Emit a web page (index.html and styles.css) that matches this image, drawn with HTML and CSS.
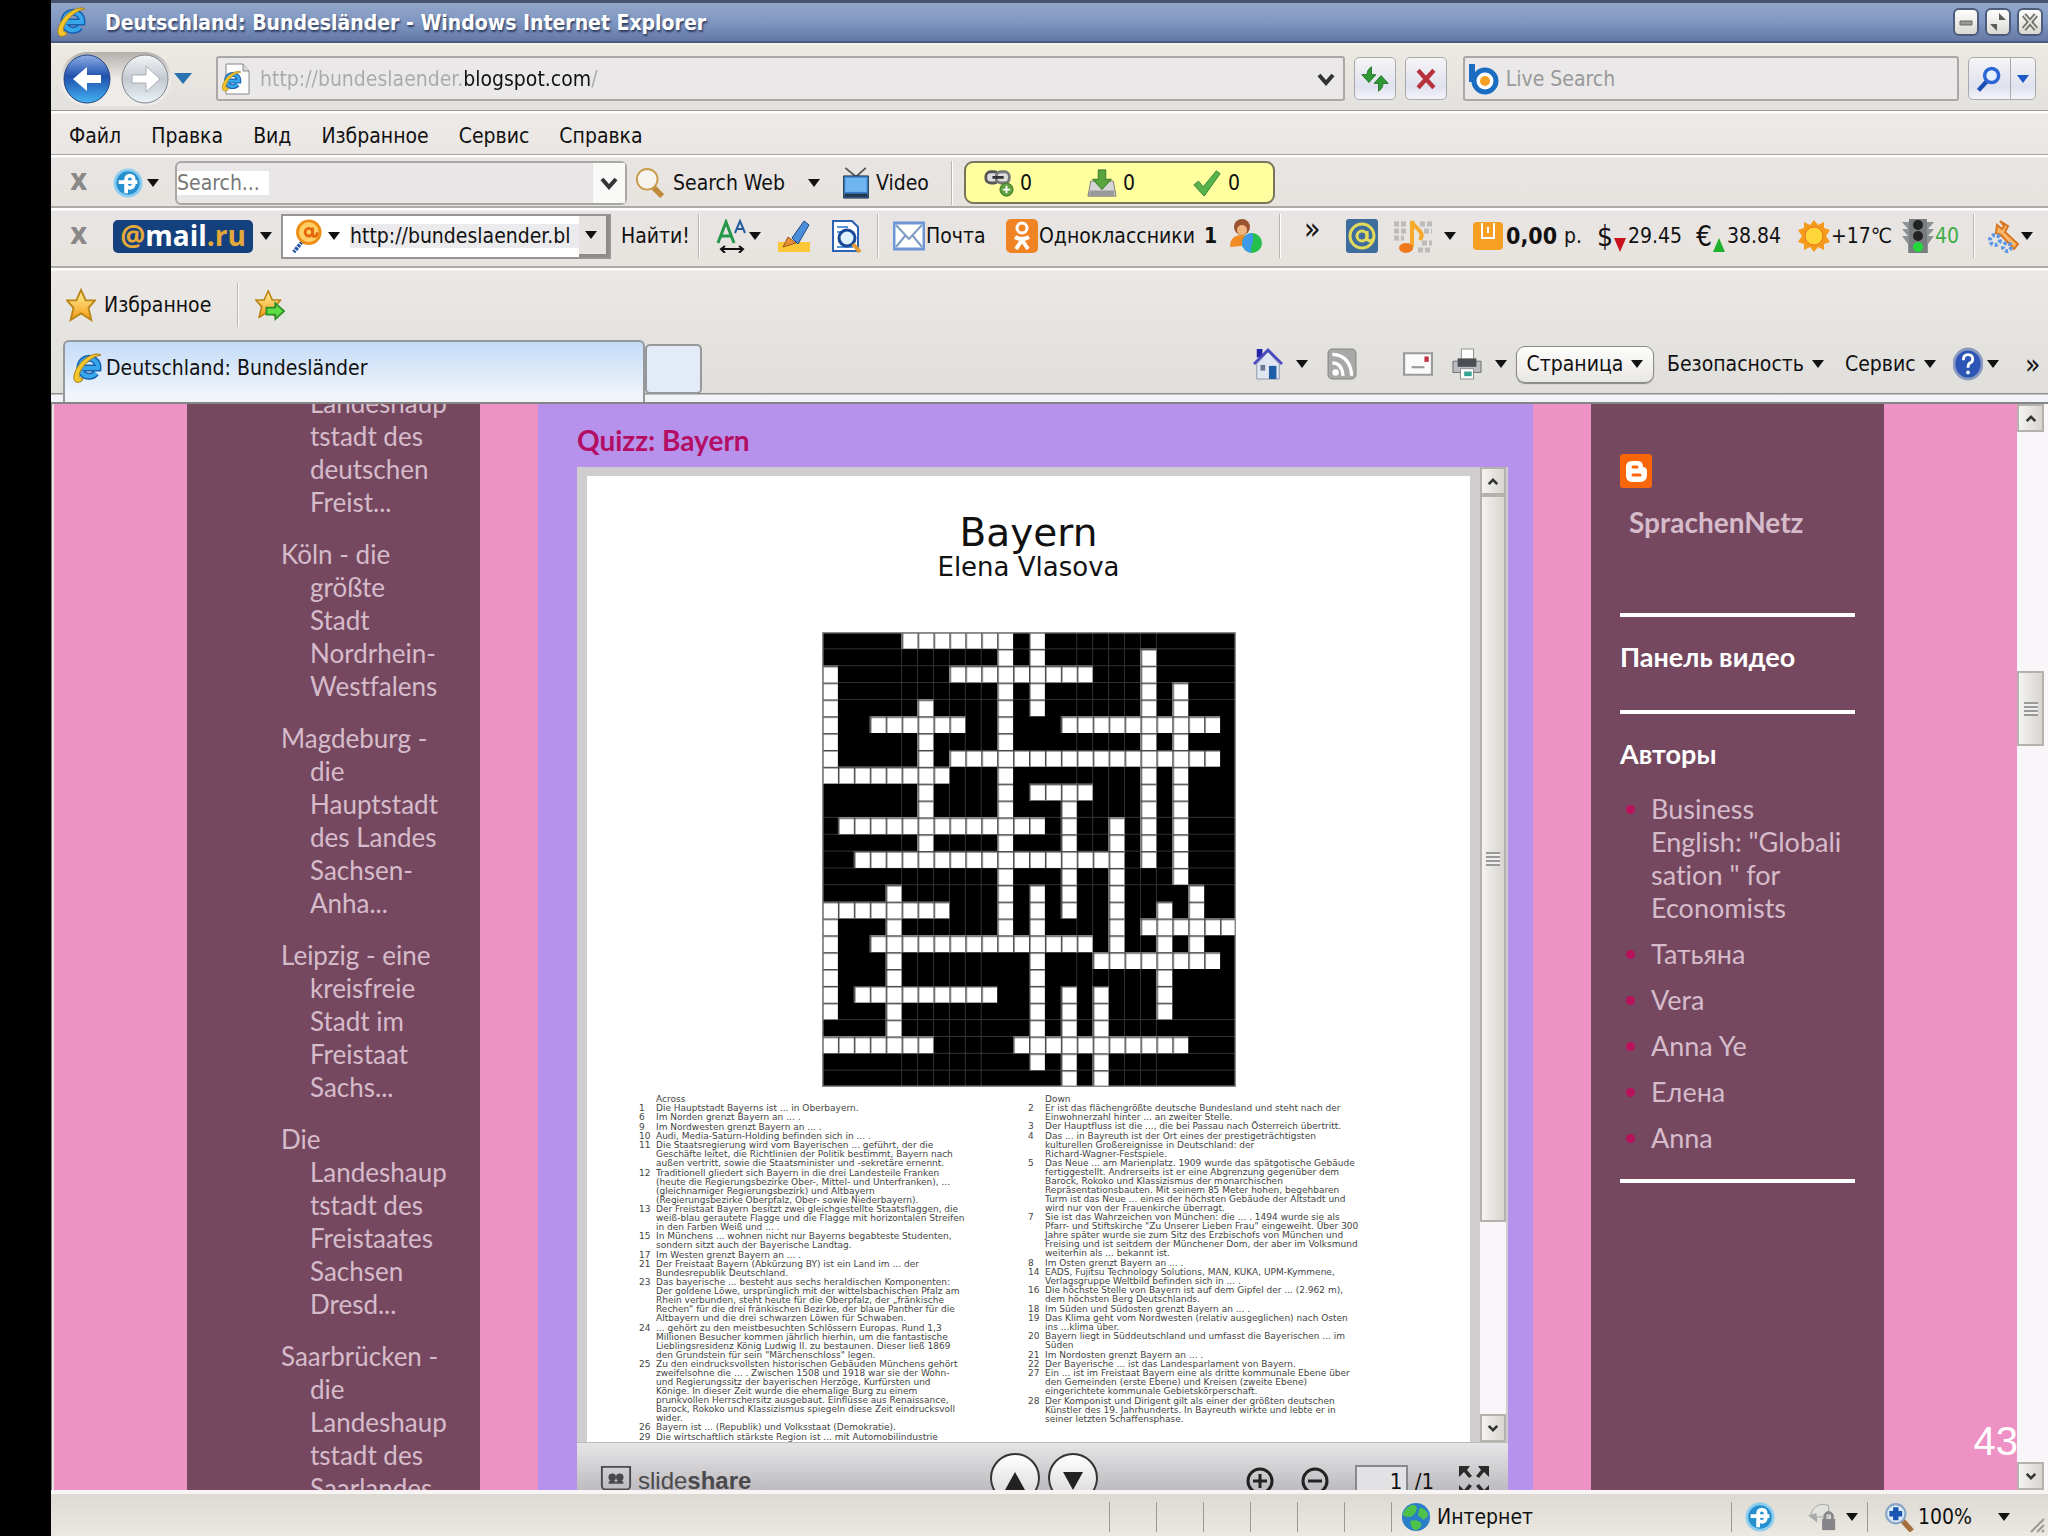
FILE: index.html
```html
<!DOCTYPE html>
<html lang="ru">
<head>
  <meta charset="UTF-8">
  <meta name="viewport" content="width=device-width, initial-scale=1.0">
  <title>Deutschland: Bundesländer</title>
  <link rel="stylesheet" href="styles.css">
</head>
<body>
  <!-- icon sprite -->
  <svg class="sprite" aria-hidden="true">
    <defs>
      <linearGradient id="blue" x1="0" y1="0" x2="0" y2="1"><stop offset="0" stop-color="#8fb0e4"/><stop offset=".45" stop-color="#1f4fae"/><stop offset="1" stop-color="#45b4f2"/></linearGradient>
      <linearGradient id="silver" x1="0" y1="0" x2="0" y2="1"><stop offset="0" stop-color="#f4f6f7"/><stop offset=".5" stop-color="#c3c9d0"/><stop offset="1" stop-color="#e9f3f6"/></linearGradient>
      <linearGradient id="gold" x1="0" y1="0" x2="0" y2="1"><stop offset="0" stop-color="#fff3a0"/><stop offset="1" stop-color="#f59a14"/></linearGradient>
    </defs>
    <symbol id="i-ie" viewBox="0 0 32 32">
      <path d="M24 21a9 9 0 1 1 2-5H10" fill="none" stroke="#1660b0" stroke-width="7"/>
      <path d="M24 21a9 9 0 1 1 2-5H10" fill="none" stroke="#38a6ea" stroke-width="4"/>
      <path d="M29 3C23-1 8 7 3 20c-3 8 0 13 7 9l1-3c-4 1-5-2-2-8C13 11 21 4 29 3z" fill="#f2c62c" stroke="#a8801c"/>
    </symbol>
    <symbol id="i-iepage" viewBox="0 0 32 32"><path d="M6 1h17l6 7v23H6z" fill="#fdfdfd" stroke="#888"/><path d="M23 1v7h6" fill="#ddd" stroke="#888"/><use href="#i-ie" x="1" y="7" width="22" height="22"/></symbol>
    <symbol id="i-back" viewBox="0 0 48 50"><ellipse cx="24" cy="25" rx="23" ry="24" fill="url(#blue)" stroke="#24437f"/><path d="M10 25l14-12v8h14v8H24v8z" fill="#fff"/></symbol>
    <symbol id="i-forward" viewBox="0 0 48 50"><ellipse cx="24" cy="25" rx="23" ry="24" fill="url(#silver)" stroke="#80868e"/><path d="M39 25L25 12v9H11v8h14v9z" fill="#fff" stroke="#aab0b6"/></symbol>
    <symbol id="i-refresh" viewBox="0 0 32 32"><path d="M12 2c-4 3-5 5-5 9H1l8 9 8-9h-5c0-4 0-6 0-9zM20 30c4-3 5-5 5-9h6l-8-9-8 9h5c0 4 0 6 0 9z" fill="#2f9a34" stroke="#1c6b22"/></symbol>
    <symbol id="i-stop" viewBox="0 0 32 32"><path d="M7 6l18 20M25 6L7 26" stroke="#b8323e" stroke-width="5"/></symbol>
    <symbol id="i-bing" viewBox="0 0 32 32"><path d="M4 1v18" stroke="#1b6dc1" stroke-width="6"/><circle cx="17" cy="18" r="11" fill="#fff" stroke="#1b6dc1" stroke-width="5"/><circle cx="17" cy="18" r="5" fill="#f7a123"/></symbol>
    <symbol id="i-lens" viewBox="0 0 32 32"><path d="M14 18L4 29" stroke="#1c50b4" stroke-width="5"/><circle cx="19" cy="12" r="8" fill="#e4f0ff" stroke="#2b66d4" stroke-width="4"/></symbol>
    <symbol id="i-lens-gold" viewBox="0 0 32 32"><path d="M20 21l9 9" stroke="#c08a3a" stroke-width="6"/><circle cx="13" cy="12" r="11" fill="#f6f4ee" stroke="#c89a4a" stroke-width="2"/></symbol>
    <symbol id="i-plus" viewBox="0 0 32 32"><circle cx="16" cy="16" r="14" fill="#2791cf" stroke="#8ccdf0" stroke-width="3"/><path d="M14 27V12a4 4 0 0 1 8 0v4a4 4 0 0 1-8 2M6 15h20" fill="none" stroke="#fff" stroke-width="4"/></symbol>
    <symbol id="i-tv" viewBox="0 0 32 36"><path d="M4 1l12 10L27 1" fill="none" stroke="#555" stroke-width="2"/><path d="M2 10h28v25H2z" fill="#3b7ec4" stroke="#234"/><path d="M4 12h24v16H4z" fill="#6fb5f2"/><path d="M3 30h26v4H3z" fill="#26384e"/></symbol>
    <symbol id="i-link" viewBox="0 0 32 32"><rect x="2" y="4" width="14" height="12" rx="5" fill="#ddd" stroke="#555" stroke-width="3"/><rect x="13" y="4" width="14" height="12" rx="5" fill="#ddd" stroke="#777" stroke-width="3"/><path d="M9 10h12" stroke="#333" stroke-width="3"/><circle cx="24" cy="23" r="7" fill="#5e9f3d" stroke="#3c7424"/><path d="M24 19v8M20 23h8" stroke="#fff" stroke-width="2"/></symbol>
    <symbol id="i-down" viewBox="0 0 32 32"><path d="M4 14h24l3 16H1z" fill="#d5d5d5" stroke="#777"/><path d="M3 24h26v6H2z" fill="#999"/><path d="M12 2h8v10h6L16 23 6 12h6z" fill="#59a33c" stroke="#34702a"/></symbol>
    <symbol id="i-check" viewBox="0 0 32 32"><path d="M2 18l5-4 5 6L26 3l4 3-17 24z" fill="#58b34c" stroke="#368435"/></symbol>
    <symbol id="i-agent" viewBox="0 0 32 36"><path d="M12 24L3 35" stroke="#2353a8" stroke-width="4" stroke-dasharray="3 1"/><circle cx="19" cy="14" r="12" fill="#ffcf66" stroke="#ee8d14" stroke-width="3"/><circle cx="19" cy="14" r="4" fill="none" stroke="#e8660d" stroke-width="3"/><path d="M23 9v7c0 4 5 3 5-2" fill="none" stroke="#e8660d" stroke-width="3"/></symbol>
    <symbol id="i-fonts" viewBox="0 0 32 34"><path d="M2 24L10 3l8 21M5 17h11" fill="none" stroke="#23984a" stroke-width="3"/><path d="M19 14l5-12 5 12M21 10h7" fill="none" stroke="#265c9c" stroke-width="2"/><path d="M5 30h22M9 27l-4 3 4 4M23 27l4 3-4 4" fill="none" stroke="#111" stroke-width="2"/></symbol>
    <symbol id="i-marker" viewBox="0 0 32 34"><path d="M0 23h32v10H0z" fill="#fcc736"/><path d="M14 19L26 2l5 4-11 19z" fill="#4a8edb" stroke="#1e4785"/><path d="M5 28l5-10 8 6z" fill="#e79038" stroke="#9a5515"/></symbol>
    <symbol id="i-find" viewBox="0 0 32 34"><path d="M3 2h19l6 6v24H3z" fill="#fff" stroke="#2b62b6" stroke-width="2"/><path d="M7 8h11M7 13h5M7 28h16" stroke="#5b95dc" stroke-width="2"/><circle cx="17" cy="19" r="8" fill="#e0f1ff" stroke="#174a96" stroke-width="3"/><path d="M23 25l7 8" stroke="#e39a35" stroke-width="4"/></symbol>
    <symbol id="i-mail" viewBox="0 0 32 28"><path d="M1 1h30v26H1z" fill="#fff" stroke="#6f96d4" stroke-width="3"/><path d="M3 3l13 14L29 3M3 25l9-11M29 25l-9-11" fill="none" stroke="#7f9cc4" stroke-width="2"/></symbol>
    <symbol id="i-ok" viewBox="0 0 32 34"><rect width="32" height="34" rx="5" fill="#f08424"/><circle cx="16" cy="9" r="5" fill="none" stroke="#fff" stroke-width="3"/><path d="M9 18q7 4 14 0M10 30l6-9 6 9" fill="none" stroke="#fff" stroke-width="4"/></symbol>
    <symbol id="i-person" viewBox="0 0 32 34"><circle cx="12" cy="8" r="8" fill="#9a5530"/><circle cx="12" cy="11" r="5" fill="#f0b680"/><path d="M0 28c0-9 5-12 12-12s10 4 10 10z" fill="#f08b26"/><circle cx="22" cy="24" r="10" fill="#23c04d"/><path d="M22 14a10 10 0 0 0 0 20c-4-6 4-9 0-20z" fill="#3e9bea"/></symbol>
    <symbol id="i-at" viewBox="0 0 32 34"><rect width="32" height="34" rx="3" fill="#3e6c9c"/><circle cx="16" cy="17" r="12" fill="none" stroke="#e3d95c" stroke-width="3"/><circle cx="16" cy="17" r="5" fill="none" stroke="#e3d95c" stroke-width="3"/><path d="M21 12v8q3 4 6 0" fill="none" stroke="#e3d95c" stroke-width="3"/></symbol>
    <symbol id="i-music" viewBox="0 0 38 34"><path d="M0 5h12M0 12h12M0 19h10M26 5h12M30 12h8M24 31h14M28 24h10" stroke="#bcbcbc" stroke-width="5" stroke-dasharray="5 2"/><path d="M18 28V2c2 8 14 10 8 19" fill="none" stroke="#f6a92b" stroke-width="4"/><ellipse cx="12" cy="29" rx="7" ry="5" fill="#f0781c"/></symbol>
    <symbol id="i-wallet" viewBox="0 0 32 32"><rect x="1" y="2" width="30" height="28" rx="4" fill="#f79f22"/><path d="M10 3v15h12V3M16 7v6" fill="none" stroke="#fff" stroke-width="2"/></symbol>
    <symbol id="i-sun" viewBox="0 0 32 32"><path d="M16 0l4 5 6-3v6l6 2-4 6 4 6-6 2v6l-6-3-4 5-4-5-6 3v-6l-6-2 4-6-4-6 6-2V2l6 3z" fill="#f59a1d"/><circle cx="16" cy="16" r="9" fill="#ffd63a" stroke="#f0711b"/></symbol>
    <symbol id="i-traffic" viewBox="0 0 32 34"><path d="M0 3h32l-6 7h6l-6 7h6l-6 8v9H6v-9l-6-8h6l-6-7h6z" fill="#8d9294"/><path d="M7 0h18v34H7z" fill="#777c7e"/><circle cx="16" cy="6" r="5" fill="#222"/><circle cx="16" cy="17" r="5" fill="#222"/><circle cx="16" cy="28" r="5" fill="#24d83c"/></symbol>
    <symbol id="i-tools" viewBox="0 0 32 34"><path d="M12 2l8 5-3 6 13 12-4 5-13-14-5-2 1-8 5 4 2-3z" fill="#f9b767" stroke="#d8741f" stroke-width="2"/><circle cx="7" cy="21" r="5" fill="none" stroke="#5c98e6" stroke-width="4" stroke-dasharray="3 2"/><circle cx="19" cy="28" r="4" fill="none" stroke="#5c98e6" stroke-width="4" stroke-dasharray="3 2"/></symbol>
    <symbol id="i-star" viewBox="0 0 32 34"><path d="M16 1l5 11h10l-7 8 3 13-11-7-11 7 3-13-7-8h10z" fill="url(#gold)" stroke="#b98515" stroke-width="2"/></symbol>
    <symbol id="i-addstar" viewBox="0 0 34 34"><use href="#i-star" width="30" height="32"/><path d="M13 20h10v-5l10 9-10 9v-5H13z" fill="#5fdc48" stroke="#2b8e27" stroke-width="2"/></symbol>
    <symbol id="i-home" viewBox="0 0 32 34"><path d="M4 1h6v9H4z" fill="#2523a8"/><path d="M4 17L16 4l12 13v16H4z" fill="#dfe6f2" stroke="#8a93a8"/><path d="M1 17L16 2l15 15" fill="none" stroke="#4a4ac0" stroke-width="3"/><path d="M17 19h8v14h-8z" fill="#1f5ca8"/><path d="M8 18h5v6H8z" fill="#6d7890"/></symbol>
    <symbol id="i-rss" viewBox="0 0 28 30"><rect x="1" y="1" width="26" height="28" rx="4" fill="#a8a8a6" stroke="#868686"/><circle cx="8" cy="23" r="3" fill="#fff"/><path d="M5 14q9 0 10 12M5 6q17 1 18 20" fill="none" stroke="#fff" stroke-width="3"/></symbol>
    <symbol id="i-letter" viewBox="0 0 28 22"><path d="M1 1h26v20H1z" fill="#fbfafa" stroke="#9a9a9a" stroke-width="2"/><path d="M20 4h4v5h-4z" fill="#c22f40"/><path d="M8 14h12" stroke="#999" stroke-width="2"/></symbol>
    <symbol id="i-printer" viewBox="0 0 32 34"><path d="M10 1h13v13H10z" fill="#fff" stroke="#8a8a8a"/><path d="M1 14h30v12H1z" fill="#b9bcc0" stroke="#6a6a6a"/><path d="M6 11h20v9H6z" fill="#4b4f54"/><path d="M9 22h14v11H9z" fill="#fff" stroke="#888"/><path d="M13 25h8v5h-8z" fill="#36a392"/></symbol>
    <symbol id="i-help" viewBox="0 0 32 34"><ellipse cx="16" cy="17" rx="15" ry="16" fill="#2c55b5" stroke="#8a9bc0" stroke-width="3"/><path d="M11 13q0-6 5-6t5 5q0 3-3 4-2 1-2 5" fill="none" stroke="#fff" stroke-width="3"/><circle cx="16" cy="26" r="2" fill="#fff"/></symbol>
    <symbol id="i-blogger" viewBox="0 0 32 34"><rect width="32" height="34" rx="3" fill="#f8650b"/><path d="M12 7h6q5 0 5 6 3 0 4 3v5q0 7-7 7h-8q-6 0-6-7v-8q0-6 6-6z" fill="#fff"/><path d="M13 13h4M13 21h7" stroke="#f8650b" stroke-width="3" stroke-linecap="round"/></symbol>
    <symbol id="i-slideshare" viewBox="0 0 34 34"><path d="M2 2h30v20q0 4-4 4H6q-4 0-4-4z" fill="none" stroke="#4a4a4d" stroke-width="2"/><circle cx="13" cy="13" r="4" fill="#4a4a4d"/><circle cx="21" cy="13" r="4" fill="#4a4a4d"/><path d="M9 20q0-4 4-4 4 0 4 4zM17 20q0-4 4-4 4 0 4 4zM8 26h18v4l-4 4H12l-4-4z" fill="#4a4a4d"/></symbol>
    <symbol id="i-zoomin" viewBox="0 0 30 30"><circle cx="15" cy="15" r="12" fill="none" stroke="#222" stroke-width="3"/><path d="M15 8v14M8 15h14M1 28h6M23 28h6" stroke="#222" stroke-width="3"/></symbol>
    <symbol id="i-zoomout" viewBox="0 0 30 30"><circle cx="15" cy="15" r="12" fill="none" stroke="#222" stroke-width="3"/><path d="M8 15h14M1 28h6M23 28h6" stroke="#222" stroke-width="3"/></symbol>
    <symbol id="i-full" viewBox="0 0 30 30"><path d="M0 0h11L8 4l5 6-3 2-5-6-5 5zM30 0H19l3 4-5 6 3 2 5-6 5 5zM0 30h11l-3-4 5-6-3-2-5 6-5-5zM30 30H19l3-4-5-6 3-2 5 6 5-5z" fill="#2b2b2b"/></symbol>
    <symbol id="i-globe" viewBox="0 0 32 32"><circle cx="16" cy="16" r="15" fill="#2b7fc9"/><path d="M8 5q7-5 9 2-2 8-8 9-6-1-7-2 1-6 6-9zM20 6q8 1 9 9l-5 4-6-5zM10 20q9-2 12 4-2 5-6 6-6-1-6-10z" fill="#4fc24a"/></symbol>
    <symbol id="i-lock" viewBox="0 0 32 32"><path d="M3 16A13 13 0 0 1 22 4v12z" fill="#e2e2df" stroke="#a2a2a0"/><path d="M0 14l9-2 1 10z" fill="#aaa"/><path d="M18 19v-5q4-6 8 0v5" fill="none" stroke="#888" stroke-width="3"/><path d="M15 18h14v12H15z" fill="#85858a"/></symbol>
    <symbol id="i-zoom" viewBox="0 0 28 28"><path d="M17 17l9 10" stroke="#a6703c" stroke-width="5"/><circle cx="11" cy="11" r="9" fill="#dcecfb" stroke="#8ba6c4" stroke-width="2"/><path d="M11 5v12M5 11h12" stroke="#1b55b2" stroke-width="5"/></symbol>
  </svg>

  <div class="window">
    <header class="titlebar">
      <svg class="icon"><use href="#i-ie"/></svg>
      <h1>Deutschland: Bundesländer - Windows Internet Explorer</h1>
      <button class="winbtn" aria-label="Свернуть"><svg viewBox="0 0 20 20"><path d="M4 9h12v4H4z" fill="#9a9a92" stroke="#666"/></svg></button>
      <button class="winbtn" aria-label="Восстановить"><svg viewBox="0 0 20 20"><path d="M11 1v7h7zM9 19v-7H2z" fill="#5c5c58"/></svg></button>
      <button class="winbtn" aria-label="Закрыть"><svg viewBox="0 0 20 20"><path d="M4 3l12 14M16 3L4 17" stroke="#65655f" stroke-width="5"/><path d="M4 3l12 14M16 3L4 17" stroke="#e0e0d8" stroke-width="2"/></svg></button>
    </header>

    <div class="navbar">
      <div class="history">
        <button aria-label="Назад"><svg><use href="#i-back"/></svg></button>
        <button aria-label="Вперед"><svg><use href="#i-forward"/></svg></button>
      </div>
      <button class="recent" aria-label="Последние страницы"><span class="caret caret-blue"></span></button>
      <div class="address">
        <svg class="icon"><use href="#i-iepage"/></svg>
        <input type="text" class="url" aria-label="Адрес" value="http://bundeslaender.blogspot.com/">
        <button aria-label="Список адресов"><svg class="chev" viewBox="0 0 18 14"><path d="M2 3l7 8 7-8" fill="none" stroke="#333" stroke-width="4"/></svg></button>
      </div>
      <button class="navbtn" aria-label="Обновить"><svg class="icon"><use href="#i-refresh"/></svg></button>
      <button class="navbtn" aria-label="Остановить"><svg class="icon"><use href="#i-stop"/></svg></button>
      <div class="live">
        <svg class="icon"><use href="#i-bing"/></svg>
        <input type="text" aria-label="Live Search" placeholder="Live Search">
      </div>
      <div class="split">
        <button aria-label="Поиск"><svg class="icon"><use href="#i-lens"/></svg></button>
        <button aria-label="Параметры поиска"><span class="caret caret-link"></span></button>
      </div>
    </div>

    <nav class="menubar">
      <button>Файл</button>
      <button>Правка</button>
      <button>Вид</button>
      <button>Избранное</button>
      <button>Сервис</button>
      <button>Справка</button>
    </nav>

    <div class="toolbar searchbar">
      <button class="close" aria-label="Закрыть панель">x</button>
      <button class="plus"><svg class="icon"><use href="#i-plus"/></svg><span class="caret"></span></button>
      <div class="searchbox">
        <input type="text" aria-label="Search" placeholder="Search...">
        <button aria-label="История поиска"><svg class="chev" viewBox="0 0 18 14"><path d="M2 3l7 8 7-8" fill="none" stroke="#333" stroke-width="4"/></svg></button>
      </div>
      <button class="web"><svg class="icon"><use href="#i-lens-gold"/></svg>Search Web</button>
      <button aria-label="Меню Search Web"><span class="caret"></span></button>
      <button class="video"><svg class="icon"><use href="#i-tv"/></svg>Video</button>
      <span class="sep"></span>
      <div class="counters">
        <span><svg class="icon"><use href="#i-link"/></svg>0</span>
        <span><svg class="icon"><use href="#i-down"/></svg>0</span>
        <span><svg class="icon"><use href="#i-check"/></svg>0</span>
      </div>
    </div>

    <div class="toolbar mailbar">
      <button class="close" aria-label="Закрыть панель">x</button>
      <button class="brand"><span class="logo"><i>@</i>mail<i>.ru</i></span><span class="caret"></span></button>
      <div class="combo">
        <svg class="icon"><use href="#i-agent"/></svg><span class="caret"></span>
        <input type="text" aria-label="Поиск Mail.ru" value="http://bundeslaender.bl">
        <button aria-label="Показать список"><span class="caret"></span></button>
      </div>
      <button>Найти!</button>
      <span class="sep"></span>
      <button class="fonts"><svg class="icon"><use href="#i-fonts"/></svg><span class="caret"></span></button>
      <button><svg class="icon"><use href="#i-marker"/></svg></button>
      <button><svg class="icon"><use href="#i-find"/></svg></button>
      <span class="sep"></span>
      <button class="tight"><svg class="icon"><use href="#i-mail"/></svg>Почта</button>
      <button class="tight"><svg class="icon"><use href="#i-ok"/></svg>Одноклассники<b>1</b></button>
      <button><svg class="icon"><use href="#i-person"/></svg></button>
      <span class="sep"></span>
      <button class="more">»</button>
      <button><svg class="icon"><use href="#i-at"/></svg></button>
      <button class="music"><svg class="icon"><use href="#i-music"/></svg><span class="caret"></span></button>
      <button class="tight money"><svg class="icon"><use href="#i-wallet"/></svg><b>0,00</b>р.</button>
      <button class="tight rate"><big>$</big><span class="fall"></span>29.45</button>
      <button class="tight rate"><big>€</big><span class="rise"></span>38.84</button>
      <button class="tight"><svg class="icon"><use href="#i-sun"/></svg>+17℃</button>
      <button class="tight green"><svg class="icon"><use href="#i-traffic"/></svg>40</button>
      <span class="sep"></span>
      <button class="fonts"><svg class="icon"><use href="#i-tools"/></svg><span class="caret"></span></button>
    </div>

    <div class="tabarea">
      <div class="favbar">
        <button><svg class="icon"><use href="#i-star"/></svg>Избранное</button>
        <span class="sep"></span>
        <button aria-label="Добавить в избранное"><svg class="icon"><use href="#i-addstar"/></svg></button>
      </div>
      <div class="tabrow">
        <button class="tab"><svg class="icon"><use href="#i-ie"/></svg>Deutschland: Bundesländer</button>
        <button class="newtab" aria-label="Новая вкладка"></button>
        <div class="commands">
          <button class="wide"><svg class="icon"><use href="#i-home"/></svg><span class="caret"></span></button>
          <button><svg class="icon"><use href="#i-rss"/></svg></button>
          <button><svg class="icon"><use href="#i-letter"/></svg></button>
          <button class="wide"><svg class="icon"><use href="#i-printer"/></svg><span class="caret"></span></button>
          <button class="pressed">Страница<span class="caret"></span></button>
          <button>Безопасность<span class="caret"></span></button>
          <button>Сервис<span class="caret"></span></button>
          <button class="help"><svg class="icon"><use href="#i-help"/></svg><span class="caret"></span></button>
          <button class="more">»</button>
        </div>
      </div>
    </div>

    <div class="viewport">
      <main class="blog">
        <aside class="left">
          <ul>
            <li><a href="#">Landeshaup<br>tstadt des<br>deutschen<br>Freist...</a></li>
            <li><a href="#">Köln - die<br>größte<br>Stadt<br>Nordrhein-<br>Westfalens</a></li>
            <li><a href="#">Magdeburg -<br>die<br>Hauptstadt<br>des Landes<br>Sachsen-<br>Anha...</a></li>
            <li><a href="#">Leipzig - eine<br>kreisfreie<br>Stadt im<br>Freistaat<br>Sachs...</a></li>
            <li><a href="#">Die<br>Landeshaup<br>tstadt des<br>Freistaates<br>Sachsen<br>Dresd...</a></li>
            <li><a href="#">Saarbrücken -<br>die<br>Landeshaup<br>tstadt des<br>Saarlandes</a></li>
          </ul>
        </aside>

        <section class="post">
          <h2>Quizz: Bayern</h2>
          <div class="player">
            <div class="stage">
              <div class="sheet">
                <h3>Bayern</h3>
                <p class="author">Elena Vlasova</p>
                <svg class="crossword" viewBox="0 0 416 459" preserveAspectRatio="none">
                  <defs>
                    <pattern id="cells" width="16" height="17" patternUnits="userSpaceOnUse"><path d="M0 0h16M0 0v17" stroke="#444" stroke-width="3"/></pattern>
                  </defs>
                  <rect width="416" height="459" fill="#000"/>
                  <path d="M0 17h416M0 34h416M0 51h416M0 68h416M0 187h416M0 204h416M0 221h416M0 238h416M0 255h416M0 391h416M0 408h416M0 425h416M0 442h416M80 0v459M96 0v459M112 0v459M128 0v459M144 0v459M160 0v459M256 0v459M272 0v459M288 0v459M304 0v459M320 0v459M336 0v459" stroke="#333"/>
                  <path id="words" fill="#fff"/>
                  <path id="lines" fill="url(#cells)"/>
                  <rect width="416" height="459" fill="none" stroke="#888" stroke-width="3"/>
                </svg>
                <div class="clues">
                  <table class="across">
                    <tr><td></td><td>Across</td></tr>
                    <tr><td>1</td><td>Die Hauptstadt Bayerns ist ... in Oberbayern.</td></tr>
                    <tr><td>6</td><td>Im Norden grenzt Bayern an ... .</td></tr>
                    <tr><td>9</td><td>Im Nordwesten grenzt Bayern an ... .</td></tr>
                    <tr><td>10</td><td>Audi, Media-Saturn-Holding befinden sich in ... .</td></tr>
                    <tr><td>11</td><td>Die Staatsregierung wird vom Bayerischen ... geführt, der die<br>Geschäfte leitet, die Richtlinien der Politik bestimmt, Bayern nach<br>außen vertritt, sowie die Staatsminister und -sekretäre ernennt.</td></tr>
                    <tr><td>12</td><td>Traditionell gliedert sich Bayern in die drei Landesteile Franken<br>(heute die Regierungsbezirke Ober-, Mittel- und Unterfranken), ...<br>(gleichnamiger Regierungsbezirk) und Altbayern<br>(Regierungsbezirke Oberpfalz, Ober- sowie Niederbayern).</td></tr>
                    <tr><td>13</td><td>Der Freistaat Bayern besitzt zwei gleichgestellte Staatsflaggen, die<br>weiß-blau gerautete Flagge und die Flagge mit horizontalen Streifen<br>in den Farben Weiß und ... .</td></tr>
                    <tr><td>15</td><td>In Münchens ... wohnen nicht nur Bayerns begabteste Studenten,<br>sondern sitzt auch der Bayerische Landtag.</td></tr>
                    <tr><td>17</td><td>Im Westen grenzt Bayern an ... .</td></tr>
                    <tr><td>21</td><td>Der Freistaat Bayern (Abkürzung BY) ist ein Land im ... der<br>Bundesrepublik Deutschland.</td></tr>
                    <tr><td>23</td><td>Das bayerische ... besteht aus sechs heraldischen Komponenten:<br>Der goldene Löwe, ursprünglich mit der wittelsbachischen Pfalz am<br>Rhein verbunden, steht heute für die Oberpfalz, der „fränkische<br>Rechen“ für die drei fränkischen Bezirke, der blaue Panther für die<br>Altbayern und die drei schwarzen Löwen für Schwaben.</td></tr>
                    <tr><td>24</td><td>... gehört zu den meistbesuchten Schlössern Europas. Rund 1,3<br>Millionen Besucher kommen jährlich hierhin, um die fantastische<br>Lieblingsresidenz König Ludwig II. zu bestaunen. Dieser ließ 1869<br>den Grundstein für sein "Märchenschloss" legen.</td></tr>
                    <tr><td>25</td><td>Zu den eindrucksvollsten historischen Gebäuden Münchens gehört<br>zweifelsohne die ... . Zwischen 1508 und 1918 war sie der Wohn-<br>und Regierungssitz der bayerischen Herzöge, Kurfürsten und<br>Könige. In dieser Zeit wurde die ehemalige Burg zu einem<br>prunkvollen Herrschersitz ausgebaut. Einflüsse aus Renaissance,<br>Barock, Rokoko und Klassizismus spiegeln diese Zeit eindrucksvoll<br>wider.</td></tr>
                    <tr><td>26</td><td>Bayern ist ... (Republik) und Volksstaat (Demokratie).</td></tr>
                    <tr><td>29</td><td>Die wirtschaftlich stärkste Region ist ... mit Automobilindustrie</td></tr>
                  </table>
                  <table class="down">
                    <tr><td></td><td>Down</td></tr>
                    <tr><td>2</td><td>Er ist das flächengrößte deutsche Bundesland und steht nach der<br>Einwohnerzahl hinter ... an zweiter Stelle.</td></tr>
                    <tr><td>3</td><td>Der Hauptfluss ist die ..., die bei Passau nach Österreich übertritt.</td></tr>
                    <tr><td>4</td><td>Das ... in Bayreuth ist der Ort eines der prestigeträchtigsten<br>kulturellen Großereignisse in Deutschland: der<br>Richard-Wagner-Festspiele.</td></tr>
                    <tr><td>5</td><td>Das Neue ... am Marienplatz. 1909 wurde das spätgotische Gebäude<br>fertiggestellt. Andrerseits ist er eine Abgrenzung gegenüber dem<br>Barock, Rokoko und Klassizismus der monarchischen<br>Repräsentationsbauten. Mit seinem 85 Meter hohen, begehbaren<br>Turm ist das Neue ... eines der höchsten Gebäude der Altstadt und<br>wird nur von der Frauenkirche überragt.</td></tr>
                    <tr><td>7</td><td>Sie ist das Wahrzeichen von München: die ... . 1494 wurde sie als<br>Pfarr- und Stiftskirche "Zu Unserer Lieben Frau" eingeweiht. Über 300<br>Jahre später wurde sie zum Sitz des Erzbischofs von München und<br>Freising und ist seitdem der Münchener Dom, der aber im Volksmund<br>weiterhin als ... bekannt ist.</td></tr>
                    <tr><td>8</td><td>Im Osten grenzt Bayern an ... .</td></tr>
                    <tr><td>14</td><td>EADS, Fujitsu Technology Solutions, MAN, KUKA, UPM-Kymmene,<br>Verlagsgruppe Weltbild befinden sich in ... .</td></tr>
                    <tr><td>16</td><td>Die höchste Stelle von Bayern ist auf dem Gipfel der ... (2.962 m),<br>dem höchsten Berg Deutschlands.</td></tr>
                    <tr><td>18</td><td>Im Süden und Südosten grenzt Bayern an ... .</td></tr>
                    <tr><td>19</td><td>Das Klima geht vom Nordwesten (relativ ausgeglichen) nach Osten<br>ins ...klima über.</td></tr>
                    <tr><td>20</td><td>Bayern liegt in Süddeutschland und umfasst die Bayerischen ... im<br>Süden</td></tr>
                    <tr><td>21</td><td>Im Nordosten grenzt Bayern an ... .</td></tr>
                    <tr><td>22</td><td>Der Bayerische ... ist das Landesparlament von Bayern.</td></tr>
                    <tr><td>27</td><td>Ein ... ist im Freistaat Bayern eine als dritte kommunale Ebene über<br>den Gemeinden (erste Ebene) und Kreisen (zweite Ebene)<br>eingerichtete kommunale Gebietskörperschaft.</td></tr>
                    <tr><td>28</td><td>Der Komponist und Dirigent gilt als einer der größten deutschen<br>Künstler des 19. Jahrhunderts. In Bayreuth wirkte und lebte er in<br>seiner letzten Schaffensphase.</td></tr>
                  </table>
                </div>
              </div>
              <div class="scroll inner">
                <button aria-label="Вверх"><svg viewBox="0 0 14 10"><path d="M2 8l5-5 5 5" fill="none" stroke="#333" stroke-width="3"/></svg></button>
                <div class="track"><div class="thumb"></div></div>
                <button aria-label="Вниз"><svg viewBox="0 0 14 10"><path d="M2 2l5 5 5-5" fill="none" stroke="#333" stroke-width="3"/></svg></button>
              </div>
            </div>
            <div class="controls">
              <a href="#" class="slideshare"><svg><use href="#i-slideshare"/></svg>slide<b>share</b></a>
              <div class="pager">
                <button aria-label="Предыдущий"><svg viewBox="0 0 20 20"><path d="M0 20L10 2l10 18z" fill="#222"/></svg></button>
                <button aria-label="Следующий"><svg viewBox="0 0 20 20"><path d="M0 2h20L10 20z" fill="#222"/></svg></button>
              </div>
              <div class="view">
                <button aria-label="Увеличить"><svg><use href="#i-zoomin"/></svg></button>
                <button aria-label="Уменьшить"><svg><use href="#i-zoomout"/></svg></button>
                <label><input type="text" value="1"> /1</label>
                <button aria-label="На весь экран"><svg><use href="#i-full"/></svg></button>
              </div>
            </div>
          </div>
        </section>

        <aside class="right">
          <section class="profile">
            <svg><use href="#i-blogger"/></svg>
            <a href="#">SprachenNetz</a>
          </section>
          <section><h2>Панель видео</h2></section>
          <section class="authors">
            <h2>Авторы</h2>
            <ul>
              <li><a href="#">Business<br>English: "Globali<br>sation " for<br>Economists</a></li>
              <li><a href="#">Татьяна</a></li>
              <li><a href="#">Vera</a></li>
              <li><a href="#">Anna Ye</a></li>
              <li><a href="#">Елена</a></li>
              <li><a href="#">Anna</a></li>
            </ul>
          </section>
        </aside>
      </main>
      <div class="scroll outer">
        <button aria-label="Вверх"><svg viewBox="0 0 14 10"><path d="M2 8l5-5 5 5" fill="none" stroke="#333" stroke-width="3"/></svg></button>
        <div class="track"><div class="thumb"></div></div>
        <button aria-label="Вниз"><svg viewBox="0 0 14 10"><path d="M2 2l5 5 5-5" fill="none" stroke="#333" stroke-width="3"/></svg></button>
      </div>
      <span class="slide-number">43</span>
    </div>

    <footer class="statusbar">
      <span class="cell"></span><span class="cell"></span><span class="cell"></span><span class="cell"></span><span class="cell"></span><span class="cell"></span>
      <span class="zone"><svg class="icon"><use href="#i-globe"/></svg>Интернет</span>
      <span class="protect"><svg class="icon"><use href="#i-plus"/></svg><button><svg class="icon"><use href="#i-lock"/></svg><span class="caret"></span></button></span>
      <button class="zoom"><svg class="icon"><use href="#i-zoom"/></svg>100%<span class="caret"></span></button>
      <svg class="grip" viewBox="0 0 16 16"><path d="M1 15L14 2M7 15l7-7M12 15l2-2" stroke="#999" stroke-width="2"/></svg>
    </footer>
  </div>

  <script>
    // words of the puzzle: column, row, length
    const across = [[5,0,7],[8,2,9],[3,5,6],[15,5,10],[8,7,17],[0,8,8],[13,9,4],[1,11,13],[2,13,17],[0,16,8],[20,17,6],[3,18,14],[17,19,8],[2,21,9],[0,24,7],[12,24,11]];
    const down = [[0,2,7],[0,16,7],[4,15,10],[6,4,10],[11,0,19],[13,0,5],[13,15,11],[15,9,8],[15,21,6],[17,21,6],[18,11,9],[20,1,13],[21,16,7],[22,3,12],[23,15,5]];
    const box = (c, r, w, h) => `M${c * 16} ${r * 17}h${w * 16}v${h * 17}h${-w * 16}z`;
    const d = across.map(([c, r, n]) => box(c, r, n, 1)).join('') + down.map(([c, r, n]) => box(c, r, 1, n)).join('');
    document.getElementById('words').setAttribute('d', d);
    document.getElementById('lines').setAttribute('d', d);
  </script>
</body>
</html>
```
FILE: styles.css
```css
* {
  box-sizing: border-box;
}
body {
  margin: 0;
  padding-left: 51px;
  background: #000;
  color: #111;
  font-family: Tahoma, "DejaVu Sans Condensed", "Noto Sans", sans-serif;
  font-size: 21px;
}
h1, h2, h3, p, ul {
  margin: 0;
  padding: 0;
}
button {
  display: flex;
  align-items: center;
  gap: 8px;
  padding: 0;
  border: none;
  background: none;
  color: inherit;
  font: inherit;
  white-space: nowrap;
}
input {
  min-width: 0;
  padding: 0;
  border: none;
  background: none;
  font: inherit;
  color: inherit;
}
a {
  color: inherit;
  text-decoration: none;
}
.sprite {
  position: absolute;
  width: 0;
  height: 0;
}
.icon {
  flex: none;
  width: 32px;
  height: 34px;
}
.caret {
  flex: none;
  border: 6px solid transparent;
  border-top: 8px solid #111;
  border-bottom: 0;
}
.caret-blue {
  border-width: 11px 9px 0;
  border-top-color: #2a72b0;
}
.caret-link {
  border-top-color: #1c58c8;
}
.chev {
  width: 18px;
  height: 14px;
}
.sep {
  width: 2px;
  height: 44px;
  border-left: 1px solid #b9b6b2;
  border-right: 1px solid #fff;
}
.window {
  display: flex;
  flex-direction: column;
  height: 100vh;
  background: #e7e4e1;
  overflow: hidden;
}

/* title bar */
.titlebar {
  display: flex;
  align-items: center;
  gap: 6px;
  height: 43px;
  padding: 0 5px;
  background: linear-gradient(#93a6c8, #7f97c2 50%, #6478a5);
  border-top: 3px solid #47536f;
  border-bottom: 2px solid #4a5a80;
}
.titlebar h1 {
  flex: 1;
  padding: 2px 0 0 11px;
  color: #fff;
  font-size: 21px;
  font-weight: bold;
  text-shadow: 1px 2px 2px #2c3b60;
}
.winbtn {
  width: 26px;
  height: 28px;
  justify-content: center;
  border: 2px solid #4e5c7c;
  border-radius: 6px;
  background: linear-gradient(#fff, #d9d8d2);
}
.winbtn svg {
  flex: none;
  width: 20px;
  height: 20px;
}

/* navigation */
.navbar {
  display: flex;
  align-items: center;
  height: 68px;
  padding: 2px 12px 0 10px;
  background: linear-gradient(#edeae2, #e3e1de);
  border-top: 2px solid #f4f1ea;
  border-bottom: 1px solid #9a9896;
}
.history {
  display: flex;
  gap: 10px;
  padding: 2px;
  border-radius: 26px;
  background: linear-gradient(#b3b0ac, #eeece8 50%);
}
.history svg {
  display: block;
  width: 48px;
  height: 50px;
}
.recent {
  width: 45px;
  padding-left: 3px;
}
.address,
.live {
  display: flex;
  align-items: center;
  height: 45px;
  border: 2px solid #aaa8a6;
  border-radius: 3px;
  background: #eae8e8;
}
.address {
  flex: 1130;
  padding: 0 8px 0 2px;
}
.live {
  flex: 496;
  margin-left: 16px;
  padding-left: 3px;
  gap: 6px;
}
.url {
  flex: 1;
  margin-left: 8px;
  background: linear-gradient(90deg, #aaa 205px, #111 205px, #111 330px, #aaa 330px);
  -webkit-background-clip: text;
  background-clip: text;
  color: transparent;
}
.live input {
  flex: 1;
}
input::placeholder {
  color: #999;
}
.navbtn,
.split {
  width: 42px;
  height: 43px;
  justify-content: center;
  margin-left: 9px;
  border: 1px solid #a9a9ac;
  border-radius: 5px;
  background: linear-gradient(#f6f5f7, #dfe1ee 70%, #f4f4fa);
}
.navbtn .icon {
  width: 30px;
  height: 28px;
}
.split {
  display: flex;
  width: 68px;
}
.split .icon {
  width: 28px;
}
.split button {
  flex: 42;
  justify-content: center;
}
.split button + button {
  flex: 25;
  border-left: 1px solid #a9a9ac;
}

/* menu */
.menubar {
  display: flex;
  align-items: center;
  gap: 30px;
  height: 44px;
  padding: 6px 0 0 18px;
  background: linear-gradient(#fff 2px, #edeae8 3px, #eae6e4);
  border-bottom: 1px solid #a5a3a1;
}

/* search and mail toolbars */
.toolbar {
  display: grid;
  align-items: center;
  background: linear-gradient(#fff 2px, #e8e4e3 3px, #e7e4df);
  border-bottom: 2px solid #adaba8;
}
.close {
  padding: 0 0 6px 19px;
  color: #8b8987;
  font-size: 30px;
  font-weight: bold;
}
.searchbar {
  grid-template-columns: 62px 62px 452px 181px 33px 110px 13px 311px;
  height: 53px;
  padding-top: 4px;
}
.searchbar .icon {
  width: 30px;
  height: 32px;
}
.plus {
  gap: 4px;
}
.video {
  gap: 5px;
}
.searchbox {
  display: flex;
  align-items: center;
  height: 44px;
  border: 2px solid #a9a7a5;
  border-radius: 6px;
  background: #e8e6e6;
}
.searchbox input {
  flex: 1;
}
.searchbox input:placeholder-shown {
  background: linear-gradient(#fff, #fff) 0 0 / 92px 100% no-repeat;
}
.searchbox input::placeholder {
  color: #777;
}
.searchbox button {
  width: 32px;
  height: 40px;
  justify-content: center;
  background: #f9f9f8;
}
.web {
  padding-left: 8px;
}
.counters {
  display: grid;
  grid-template-columns: 103px 105px 1fr;
  align-items: center;
  height: 43px;
  padding-left: 18px;
  border: 2px solid #77765c;
  border-radius: 9px;
  background: #ffffa0;
}
.counters span {
  display: flex;
  align-items: center;
  gap: 6px;
}
.mailbar {
  grid-template-columns: 62px 168px 340px 77px 18px 62px 52px 47px 16px 113px 224px 49px 25px 42px 48px 78px 125px 99px 102px 104px 71px 15px 1fr;
  height: 60px;
  padding-bottom: 2px;
}
.mailbar > .more {
  padding-bottom: 16px;
  font-size: 30px;
}
.mailbar .caret {
  margin-left: -2px;
}
.fonts {
  gap: 3px;
}
.brand {
  gap: 9px;
}
.logo {
  display: block;
  width: 140px;
  height: 33px;
  border-radius: 5px;
  background: #14417e;
  color: #fff;
  font: bold 28px/30px "Open Sans", sans-serif;
  text-align: center;
}
.logo i {
  color: #e3a83c;
  font-style: normal;
}
.combo {
  display: flex;
  align-items: center;
  width: 330px;
  height: 45px;
  padding-left: 7px;
  border: 2px solid #979593;
  background: #fff;
  background-clip: padding-box;
}
.combo input {
  flex: 1;
  margin-left: 10px;
  background: #ebebed;
}
.combo .caret {
  margin-left: 6px;
}
.combo button {
  width: 30px;
  height: 41px;
  border-right: 3px solid #8e8c8a;
  border-bottom: 3px solid #8e8c8a;
  background: #e6e3e0;
}
.tight {
  gap: 1px;
}
.tight b {
  margin-left: 8px;
}
.mailbar .money b {
  margin: 0 6px 0 1px;
  font-size: 23px;
}
.mailbar .music .icon {
  width: 38px;
}
.music {
  gap: 14px;
}
.rate big {
  font-size: 28px;
}
.fall,
.rise {
  margin: 18px 1px 0 0;
  border: 6px solid transparent;
  border-top: 14px solid #c81420;
  border-bottom: 0;
}
.rise {
  border-top: 0;
  border-bottom: 14px solid #1fb12c;
}
.green {
  color: #3fae49;
}

/* favourites, tabs, command bar */
.tabarea {
  height: 136px;
  background: linear-gradient(#fff 2px, #ebe8e6 3px, #dfdeda);
}
.favbar {
  display: flex;
  align-items: center;
  height: 72px;
  padding: 2px 0 0 15px;
}
.favbar .icon {
  width: 30px;
}
.favbar .sep {
  margin: 0 16px 0 26px;
}
.tabrow {
  display: flex;
  align-items: flex-end;
  height: 64px;
  padding: 0 5px 0 12px;
  border-bottom: 2px solid #858583;
  background: linear-gradient(transparent 53px, #8f8e8b 53px, #8f8e8b 54px, #f1f3f9 55px);
}
.tab {
  width: 582px;
  height: 62px;
  gap: 2px;
  padding: 0 0 8px 7px;
  border: 2px solid #97989c;
  border-bottom: none;
  border-radius: 6px 6px 0 0;
  background: linear-gradient(#c3dcf7, #f1f4fb 90%);
}
.newtab {
  width: 57px;
  height: 50px;
  margin-bottom: 8px;
  border: 2px solid #97989c;
  border-radius: 5px;
  background: #e3ebf9;
}
.commands {
  display: grid;
  grid-template-columns: 74px 76px 49px 64px 151px 178px 108px 72px 18px;
  align-items: center;
  height: 62px;
  margin-left: auto;
  padding-bottom: 14px;
}
.commands .icon {
  width: 30px;
}
.commands .wide {
  gap: 13px;
}
.commands > .pressed {
  width: 138px;
  height: 37px;
  justify-content: center;
  border: 1px solid #8b8a88;
  border-radius: 9px;
  background: linear-gradient(#fdfdfc, #e9e7e3);
  box-shadow: 0 1px 1px #888;
}
.help {
  gap: 4px;
}
.more {
  font-size: 28px;
}

/* page */
.viewport {
  position: relative;
  display: flex;
  flex: 1;
  min-height: 0;
  padding-left: 2px;
  border-left: 1px solid #777;
}
.blog {
  display: grid;
  grid-template-columns: 293fr 58fr 995fr 58fr 293fr;
  flex: 1;
  min-width: 0;
  padding: 0 133px;
  overflow: hidden;
  background: #ee92c6;
  font-family: "Comic Sans MS", Lato, "Noto Sans", sans-serif;
  font-size: 27px;
  font-variant-ligatures: none;
  line-height: 33px;
}
.left,
.right {
  min-width: 0;
  background: #754860;
  color: #d6bccb;
}
.left {
  min-height: 0;
  overflow: hidden;
  font-size: 26px;
}
.left ul {
  margin-top: -17px;
  padding-left: 94px;
  list-style: none;
}
.left li {
  margin-bottom: 19px;
  padding-left: 29px;
  text-indent: -29px;
  white-space: nowrap;
}
.left li:first-child {
  text-indent: 0;
}
.post {
  display: flex;
  grid-column: 3;
  flex-direction: column;
  min-width: 0;
  min-height: 0;
  padding: 20px 25px 0 39px;
  background: #b792ec;
}
.post h2 {
  height: 43px;
  color: #b40d64;
  font-size: 28px;
}
.player {
  display: flex;
  flex: 1;
  flex-direction: column;
  min-height: 0;
}
.stage {
  display: flex;
  flex: 1;
  min-height: 0;
  padding: 0 2px 0 10px;
  background: #cfcdcd;
}
.sheet {
  flex: 1;
  min-width: 0;
  margin: 9px 10px 0 0;
  overflow: hidden;
  background: #fff;
  color: #111;
  font-family: "DejaVu Sans", sans-serif;
  text-align: center;
}
.sheet h3 {
  margin-top: 37px;
  font-size: 39px;
  font-weight: normal;
  line-height: 40px;
}
.author {
  font-size: 26px;
  line-height: 28px;
}
.crossword {
  display: block;
  width: 414px;
  height: 455px;
  margin: 51px auto 0;
}
.clues {
  display: grid;
  grid-template-columns: 389px 1fr;
  align-items: start;
  padding: 8px 0 0 52px;
  color: #444;
  font-size: 9px;
  line-height: 9px;
  text-align: left;
  white-space: nowrap;
}
.clues table {
  border-spacing: 0;
}
.clues td {
  padding: 0;
  vertical-align: top;
}
.clues tr:nth-child(3n) td {
  padding-bottom: 1px;
}
.clues td:first-child {
  width: 17px;
}
.controls {
  display: grid;
  grid-template-columns: 1fr auto 1fr;
  align-items: start;
  height: 48px;
  padding: 10px 19px 0 22px;
  overflow: hidden;
  border-top: 1px solid #bbb;
  background: linear-gradient(#e6e5e6, #bdbbbf);
}
.slideshare {
  display: flex;
  align-items: center;
  margin-top: 12px;
  color: #4a4a4d;
  font: 24px/32px "Liberation Sans", sans-serif;
}
.slideshare svg {
  width: 34px;
  height: 32px;
  margin-right: 5px;
}
.pager {
  display: flex;
  gap: 8px;
}
.pager button {
  width: 50px;
  height: 50px;
  justify-content: center;
  border: 2px solid #333;
  border-radius: 50%;
  background: linear-gradient(#fff, #d5d5d5);
}
.pager svg {
  width: 20px;
  height: 20px;
  margin-top: 4px;
}
.view {
  display: flex;
  justify-content: flex-end;
  gap: 25px;
  padding-top: 12px;
}
.view svg {
  width: 30px;
  height: 30px;
}
.view label {
  font: 22px/30px Tahoma, "DejaVu Sans Condensed", sans-serif;
}
.view input {
  width: 53px;
  height: 32px;
  padding-right: 4px;
  border: 2px solid #8a8a8c;
  background: #e2e1e3;
  text-align: right;
}

/* scrollbars */
.scroll {
  display: flex;
  flex-direction: column;
  width: 26px;
  background: #f8f6f8;
}
.scroll button {
  width: 100%;
  height: 28px;
  justify-content: center;
  border: 2px solid #b5b2ae;
  background: linear-gradient(90deg, #f4f3f1, #d8d5d0);
}
.scroll button svg {
  flex: none;
  width: 12px;
  height: 9px;
}
.track {
  flex: 1;
}
.thumb {
  border: 2px solid #b5b2ae;
  background: repeating-linear-gradient(#999 0 2px, #eee 2px 4px) center / 14px 14px no-repeat, linear-gradient(90deg, #f4f3f1, #d8d5d0);
}
.outer {
  width: 31px;
  padding-right: 4px;
}
.outer .thumb {
  height: 75px;
  margin-top: 239px;
}
.inner .thumb {
  height: 727px;
}

/* right column */
.right {
  grid-column: 5;
  padding: 0 29px;
}
.right section {
  border-bottom: 4px solid #fff;
}
.right h2 {
  padding: 23px 0 37px;
  color: #fff;
  font-size: 27px;
}
.profile {
  height: 213px;
  padding-top: 50px;
}
.profile svg {
  display: block;
  width: 32px;
  height: 34px;
  margin-bottom: 18px;
}
.profile a {
  padding-left: 9px;
  font-size: 28px;
  font-weight: bold;
}
.authors ul {
  padding-left: 31px;
}
.right .authors h2 {
  padding-bottom: 22px;
}
.authors li {
  margin-bottom: 13px;
  white-space: nowrap;
}
.authors li:last-child {
  margin-bottom: 25px;
}
.authors li::marker {
  color: #b8125c;
}
.slide-number {
  position: absolute;
  right: 30px;
  bottom: 26px;
  color: #fff;
  font: 40px/46px "Liberation Sans", sans-serif;
}

/* status bar */
.statusbar {
  display: flex;
  align-items: center;
  height: 46px;
  padding: 3px 0 0 1058px;
  border-top: 4px solid #f8f4f4;
  background: linear-gradient(#dddad5, #ebe8e1);
}
.cell {
  width: 47px;
}
.cell,
.zone,
.protect,
.zoom {
  height: 30px;
  border-left: 1px solid #999;
}
.zone,
.protect {
  display: flex;
  align-items: center;
}
.zone {
  flex: 1;
  gap: 6px;
  padding-left: 9px;
}
.protect {
  gap: 33px;
  width: 136px;
  padding-left: 13px;
}
.protect button {
  gap: 8px;
}
.statusbar .icon {
  width: 30px;
  height: 30px;
}
.statusbar > .zoom {
  gap: 4px;
  padding-left: 16px;
}
.zoom .caret {
  margin-left: 22px;
}
.grip {
  width: 16px;
  height: 16px;
  margin: 16px 2px 0 20px;
}
```
